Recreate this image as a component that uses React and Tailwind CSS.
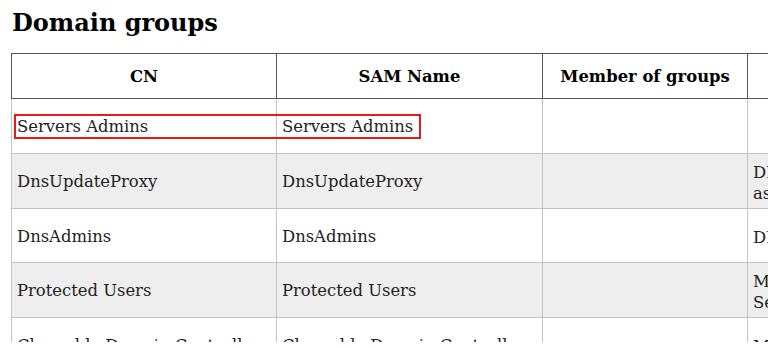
import React from 'react';

const rows = [
    { cn: 'Servers Admins', sam: 'Servers Admins', member: '', desc: [''], shade: false, h: 'h-[55px]' },
    { cn: 'DnsUpdateProxy', sam: 'DnsUpdateProxy', member: '', desc: ['DNS clients who are permitted to perform dynamic updates', 'as DHCP servers).'], shade: true, h: 'h-[55px]' },
    { cn: 'DnsAdmins', sam: 'DnsAdmins', member: '', desc: ['DNS Administrators Group'], shade: false, h: 'h-[54px]' },
    { cn: 'Protected Users', sam: 'Protected Users', member: '', desc: ['Members of this group are afforded additional protections', 'Security threats.'], shade: true, h: 'h-[55px]' },
    { cn: 'Cloneable Domain Controllers', sam: 'Cloneable Domain Controllers', member: '', desc: ['Members of this group that are domain controllers may be cloned.'], shade: false, h: 'h-[55px]' },
];

const App = () => {
    return (
        <div className="w-[779px] h-[348px] overflow-hidden bg-white text-[#222]" style={{ fontFamily: '"DejaVu Serif", serif' }}>
            <h1 className="pl-[12px] pt-[8px] h-[53px] text-[24px] font-bold text-black leading-[30px]">Domain groups</h1>

            <div className="relative ml-[11px] w-[757px] h-[289px] overflow-hidden">
                <table className="border-collapse table-fixed w-[960px] text-[16.4px]">
                    <colgroup>
                        <col className="w-[265px]" />
                        <col className="w-[266px]" />
                        <col className="w-[205px]" />
                        <col className="w-[224px]" />
                    </colgroup>
                    <thead>
                        <tr className="h-[45px]">
                            <th className="border border-[#555] pt-[2px] font-bold text-black text-center">CN</th>
                            <th className="border border-[#555] pt-[2px] font-bold text-black text-center">SAM Name</th>
                            <th className="border border-[#555] pt-[2px] font-bold text-black text-center">Member of groups</th>
                            <th className="border border-[#555] pt-[2px] font-bold text-black text-center">Description</th>
                        </tr>
                    </thead>
                    <tbody>
                        {rows.map((r, i) => (
                            <tr key={i} className={`${r.h} ${r.shade ? 'bg-[#eeeeee]' : 'bg-white'}`}>
                                <td className="border border-[#c4c4c4] px-[5px] pt-[2px] whitespace-nowrap overflow-hidden leading-[20px]">{r.cn}</td>
                                <td className="border border-[#c4c4c4] px-[5px] pt-[2px] whitespace-nowrap overflow-hidden leading-[20px]">{r.sam}</td>
                                <td className="border border-[#c4c4c4] px-[5px] pt-[2px] leading-[20px]">{r.member}</td>
                                <td className="border border-[#c4c4c4] px-[5px] pt-[3px] whitespace-nowrap leading-[21px]">
                                    {r.desc.map((d, j) => (
                                        <div key={j}>{d}</div>
                                    ))}
                                </td>
                            </tr>
                        ))}
                    </tbody>
                </table>

                {/* highlight box over the first row */}
                <div className="absolute left-[3px] top-[61px] w-[407px] h-[25px] border-2 border-[#e21b1b]" />
            </div>
        </div>
    );
};

export default App;
